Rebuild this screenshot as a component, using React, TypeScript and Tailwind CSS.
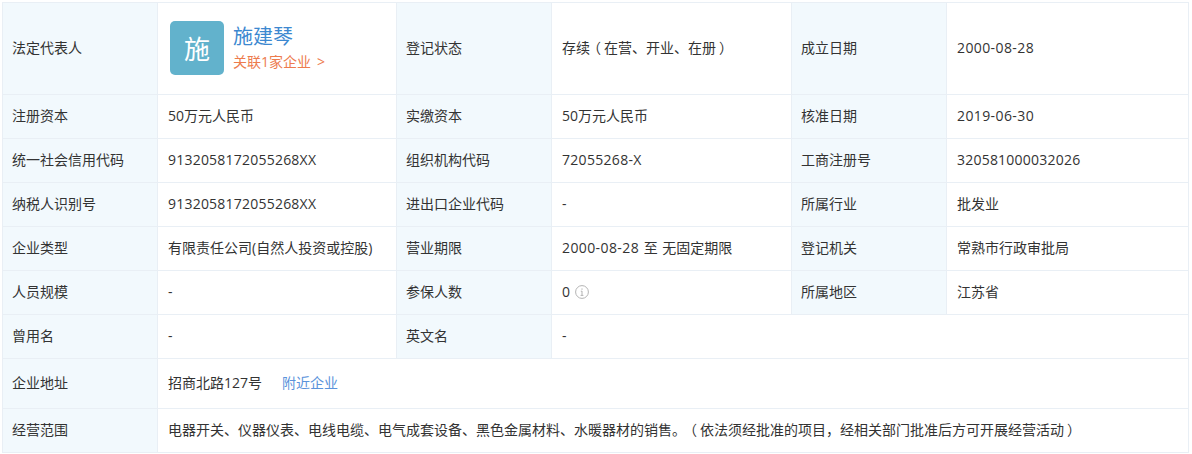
const FONT = "font-['Open_Sans','Noto_Sans_CJK_SC',sans-serif]";

function Label({ children }: { children: React.ReactNode }) {
  return <td className="border border-[#e9eff5] bg-[#f2f9fd] pb-[2px] pl-[9px] pr-2 text-[14px] text-[#333]">{children}</td>;
}

function Value({ children, colSpan }: { children: React.ReactNode; colSpan?: number }) {
  return (
    <td colSpan={colSpan} className="border border-[#e9eff5] bg-white pb-[2px] pl-[10px] pr-2 text-[14px] text-[#333] [text-spacing-trim:space-all]">
      {children}
    </td>
  );
}

// long number runs sit a little wider in the original
function Num({ children }: { children: React.ReactNode }) {
  return <span className="tracking-[0.22px]">{children}</span>;
}

function DateText({ children }: { children: React.ReactNode }) {
  return <span className="tracking-[0.4px]">{children}</span>;
}

// full-width brackets are centred in their box in the original
function Open() {
  return <span className="ml-[4px] mr-[3px] inline-block w-[7px] [text-spacing-trim:trim-start]">（</span>;
}

function Close() {
  return <span className="inline-block translate-x-[3px]">）</span>;
}

const rows: [string, React.ReactNode, string, React.ReactNode, string, React.ReactNode][] = [
  ['注册资本', '50万元人民币', '实缴资本', '50万元人民币', '核准日期', <DateText>2019-06-30</DateText>],
  [
    '统一社会信用代码',
    <Num>9132058172055268XX</Num>,
    '组织机构代码',
    <span className="tracking-[0.3px]">72055268-X</span>,
    '工商注册号',
    <Num>320581000032026</Num>,
  ],
  ['纳税人识别号', <Num>9132058172055268XX</Num>, '进出口企业代码', '-', '所属行业', '批发业'],
  [
    '企业类型',
    '有限责任公司(自然人投资或控股)',
    '营业期限',
    <span className="[word-spacing:1px]">
      <DateText>2000-08-28</DateText> 至 无固定期限
    </span>,
    '登记机关',
    '常熟市行政审批局',
  ],
];

export default function App() {
  return (
    <div className={`h-[454px] w-[1192px] overflow-hidden bg-white pl-[2px] pt-[2px] ${FONT}`}>
      <table className="w-[1186px] table-fixed border-collapse">
        <colgroup>
          <col className="w-[155px]" />
          <col className="w-[239px]" />
          <col className="w-[155px]" />
          <col className="w-[240px]" />
          <col className="w-[155px]" />
          <col className="w-[242px]" />
        </colgroup>
        <tbody>
          <tr className="h-[92px]">
            <Label>法定代表人</Label>
            <Value>
              <div className="flex items-center gap-[9px] pl-[2px]">
                <div className="flex h-[54px] w-[54px] items-center justify-center rounded-[5px] bg-[#62b2cc] pt-[3px] text-[26px] text-white">
                  施
                </div>
                <div className="flex flex-col">
                  <a className="text-[20px] leading-[28px] text-[#3c88d0]">施建琴</a>
                  <a className="text-[14px] leading-[22px] text-[#ed7b4d]">
                    关联1家企业<span className="ml-[6px]">&gt;</span>
                  </a>
                </div>
              </div>
            </Value>
            <Label>登记状态</Label>
            <Value>
              存续<Open />在营、开业、在册<Close />
            </Value>
            <Label>成立日期</Label>
            <Value>
              <DateText>2000-08-28</DateText>
            </Value>
          </tr>
          {rows.map((r) => (
            <tr key={r[0]} className="h-[44px]">
              <Label>{r[0]}</Label>
              <Value>{r[1]}</Value>
              <Label>{r[2]}</Label>
              <Value>{r[3]}</Value>
              <Label>{r[4]}</Label>
              <Value>{r[5]}</Value>
            </tr>
          ))}
          <tr className="h-[44px]">
            <Label>人员规模</Label>
            <Value>-</Value>
            <Label>参保人数</Label>
            <Value>
              <span className="inline-flex items-center gap-[5px]">
                0
                <svg width="14" height="14" viewBox="0 0 14 14" fill="none" stroke="#b4b4b4">
                  <circle cx="7" cy="7" r="6.4" />
                  <path d="M7 3.4v1.4M7 6v4.4M5.8 6.2H7M5.6 10.4h2.8" />
                </svg>
              </span>
            </Value>
            <Label>所属地区</Label>
            <Value>江苏省</Value>
          </tr>
          <tr className="h-[44px]">
            <Label>曾用名</Label>
            <Value>-</Value>
            <Label>英文名</Label>
            <Value colSpan={3}>-</Value>
          </tr>
          <tr className="h-[50px]">
            <Label>企业地址</Label>
            <Value colSpan={5}>
              招商北路127号
              <a className="ml-[20px] text-[#5b93db]">附近企业</a>
            </Value>
          </tr>
          <tr className="h-[44px]">
            <Label>经营范围</Label>
            <Value colSpan={5}>
              电器开关、仪器仪表、电线电缆、电气成套设备、黑色金属材料、水暖器材的销售。<Open />依法须经批准的项目，经相关部门批准后方可开展经营活动<Close />
            </Value>
          </tr>
        </tbody>
      </table>
    </div>
  );
}
